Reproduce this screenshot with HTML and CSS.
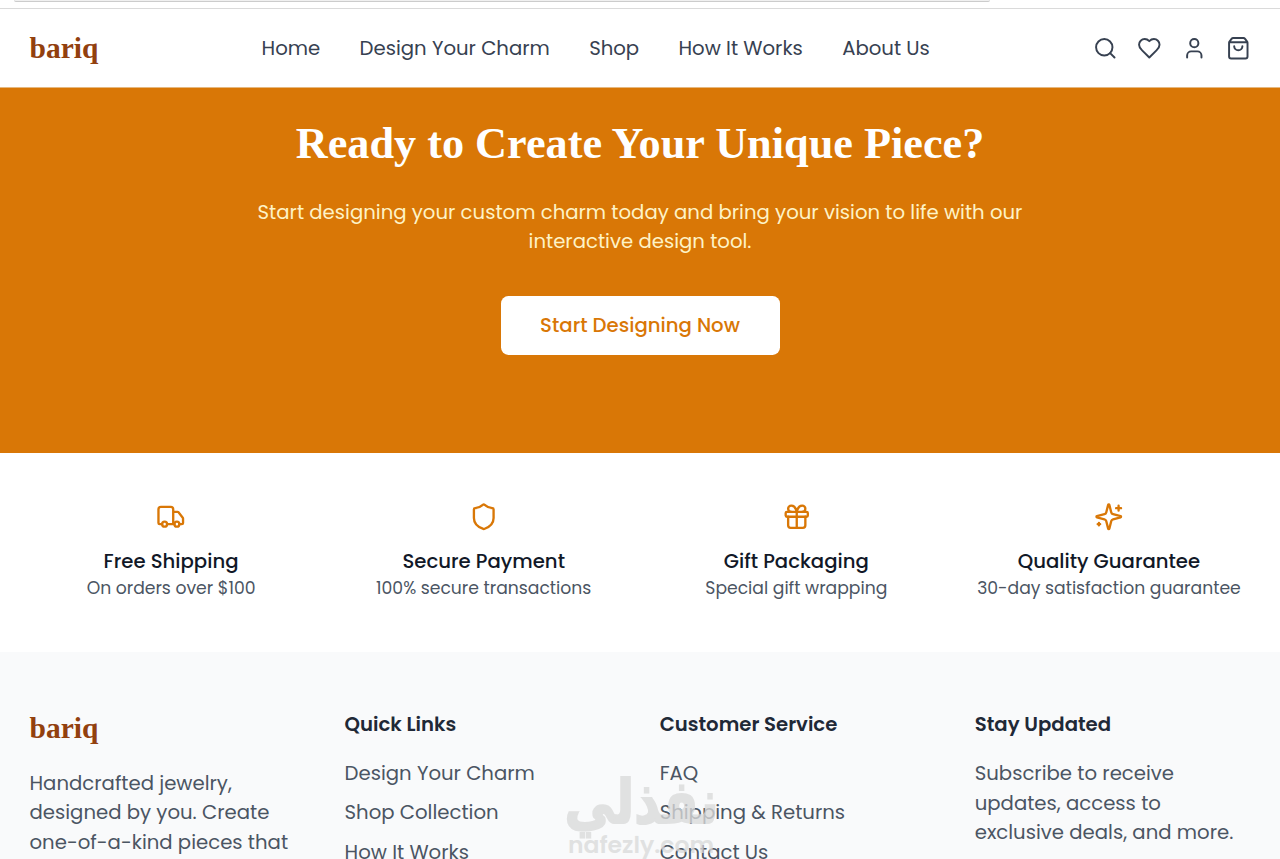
FILE: index.html
```html
<!DOCTYPE html>
<html lang="en">
<head>
<meta charset="utf-8">
<title>bariq</title>
<link rel="stylesheet" href="styles.css">
</head>
<body>
<div class="chrome"><div class="address"></div></div>
<header class="header">
  <a class="logo">bariq</a>
  <nav class="nav">
    <a>Home</a><a>Design Your Charm</a><a>Shop</a><a>How It Works</a><a>About Us</a>
  </nav>
  <div class="actions">
    <svg viewBox="0 0 24 24"><circle cx="11" cy="11" r="8"/><path d="m21 21-4.3-4.3"/></svg>
    <svg viewBox="0 0 24 24"><path d="M19 14c1.49-1.46 3-3.21 3-5.5A5.5 5.5 0 0 0 16.5 3c-1.76 0-3 .5-4.5 2-1.5-1.5-2.74-2-4.5-2A5.5 5.5 0 0 0 2 8.5c0 2.3 1.5 4.05 3 5.5l7 7Z"/></svg>
    <svg viewBox="0 0 24 24"><path d="M19 21v-2a4 4 0 0 0-4-4H9a4 4 0 0 0-4 4v2"/><circle cx="12" cy="7" r="4"/></svg>
    <svg viewBox="0 0 24 24"><path d="M3.1 6.03h17.8M3.4 5.47a2 2 0 0 0-.4 1.2V20a2 2 0 0 0 2 2h14a2 2 0 0 0 2-2V6.67a2 2 0 0 0-.4-1.2l-2-2.67A2 2 0 0 0 17 2H7a2 2 0 0 0-1.6.8zM16 10a4 4 0 0 1-8 0"/></svg>
  </div>
</header>
<section class="cta">
  <h2>Ready to Create Your Unique Piece?</h2>
  <p>Start designing your custom charm today and bring your vision to life with our<br>interactive design tool.</p>
  <a class="button">Start Designing Now</a>
</section>
<section class="features">
  <div class="feature">
    <svg viewBox="0 0 24 24"><path d="M14 18V6a2 2 0 0 0-2-2H4a2 2 0 0 0-2 2v11a1 1 0 0 0 1 1h2M15 18H9M19 18h2a1 1 0 0 0 1-1v-3.65a1 1 0 0 0-.22-.62l-3.48-4.35A1 1 0 0 0 17.52 8H14"/><circle cx="17" cy="18" r="2"/><circle cx="7" cy="18" r="2"/></svg>
    <h3>Free Shipping</h3>
    <p>On orders over $100</p>
  </div>
  <div class="feature">
    <svg viewBox="0 0 24 24"><path d="M20 13c0 5-3.5 7.5-7.66 8.95a1 1 0 0 1-.67-.01C7.5 20.5 4 18 4 13V6a1 1 0 0 1 1-1c2 0 4.5-1.2 6.24-2.72a1.17 1.17 0 0 1 1.52 0C14.51 3.81 17 5 19 5a1 1 0 0 1 1 1z"/></svg>
    <h3>Secure Payment</h3>
    <p>100% secure transactions</p>
  </div>
  <div class="feature">
    <svg viewBox="0 0 24 24"><rect x="3" y="8" width="18" height="4" rx="1"/><path d="M12 8v13M19 12v7a2 2 0 0 1-2 2H7a2 2 0 0 1-2-2v-7M7.5 8a2.5 2.5 0 0 1 0-5A4.8 8 0 0 1 12 8a4.8 8 0 0 1 4.5-5 2.5 2.5 0 0 1 0 5"/></svg>
    <h3>Gift Packaging</h3>
    <p>Special gift wrapping</p>
  </div>
  <div class="feature">
    <svg viewBox="0 0 24 24"><path d="M9.94 15.5A2 2 0 0 0 8.5 14.06l-6.14-1.58a.5.5 0 0 1 0-.96L8.5 9.94A2 2 0 0 0 9.94 8.5l1.58-6.14a.5.5 0 0 1 .96 0L14.06 8.5A2 2 0 0 0 15.5 9.94l6.14 1.58a.5.5 0 0 1 0 .96L15.5 14.06a2 2 0 0 0-1.44 1.44l-1.58 6.14a.5.5 0 0 1-.96 0zM20 3v4M22 5h-4M4 17v2M5 18H3"/></svg>
    <h3>Quality Guarantee</h3>
    <p>30-day satisfaction guarantee</p>
  </div>
</section>
<footer class="footer">
  <div>
    <div class="logo">bariq</div>
    <p class="about">Handcrafted jewelry,<br>designed by you. Create<br>one-of-a-kind pieces that</p>
  </div>
  <div>
    <h4>Quick Links</h4>
    <ul><li>Design Your Charm</li><li>Shop Collection</li><li>How It Works</li></ul>
  </div>
  <div>
    <h4>Customer Service</h4>
    <ul><li>FAQ</li><li>Shipping &amp; Returns</li><li>Contact Us</li></ul>
  </div>
  <div>
    <h4>Stay Updated</h4>
    <p>Subscribe to receive<br>updates, access to<br>exclusive deals, and more.</p>
  </div>
</footer>
<div class="mark">
  <div class="mark-ar" lang="ar" dir="rtl">نفذلي</div>
  <div class="mark-en">nafezly.com</div>
</div>
</body>
</html>
```
FILE: styles.css
```css
* { box-sizing: border-box; }
body, h2, h3, h4, p, ul { margin: 0; padding: 0; }
body {
  height: 859px; overflow: hidden; position: relative; background: #fff;
  font-family: Poppins, Inter, sans-serif; font-size: 19.68px; line-height: 29.5px; color: #4b5563;
}
svg { fill: none; stroke: currentColor; stroke-width: 2; stroke-linecap: round; stroke-linejoin: round; display: block; }

.chrome { height: 9px; border-bottom: 1px solid #dadada; padding-left: 14px; }
.address { width: 976px; height: 2px; background: #f0f0f0; border-bottom: 1px solid #ccc; border-radius: 0 0 12px 12px; }

.header { height: 79px; padding: 0 29.5px; display: flex; align-items: center; justify-content: space-between; border-bottom: 1px solid #e5b880; }
.logo { font-family: "Liberation Serif", serif; font-weight: 700; font-size: 29.5px; line-height: 39.3px; color: #92400e; }
.header .logo { padding-top: 1px; }
.nav { display: flex; gap: 39.3px; color: #374151; padding-top: 1px; }
.actions { display: flex; gap: 19.7px; color: #374151; }
.actions svg { width: 24.6px; height: 24.6px; stroke-width: 1.9; }

.cta { height: 365px; background: #d97706; text-align: center; padding-top: 31px; }
.cta h2 { font: 700 44.25px/49px "Liberation Serif", serif; color: #fff; margin-bottom: 29.7px; }
.cta p { color: #fef3c7; margin-bottom: 39.3px; }
.button {
  display: inline-flex; width: 279px; height: 59px; align-items: center; justify-content: center;
  border-radius: 7.4px; background: #fff; color: #d97706; font-weight: 500;
}

.features { height: 199px; padding: 49px 29.5px 0; display: grid; grid-template-columns: repeat(4, 1fr); gap: 29.5px; text-align: center; }
.feature svg { width: 29.5px; height: 29.5px; margin: 0 auto 15.2px; color: #d97706; stroke-width: 1.9; }
.feature h3 { font-size: 19.68px; font-weight: 500; color: #111827; line-height: 29.5px; }
.feature p { font-size: 17.2px; line-height: 24.6px; }

.footer { height: 207px; overflow: hidden; background: #f9fafb; padding: 57.7px 29.5px 0; display: grid; grid-template-columns: repeat(4, 1fr); gap: 39.3px; }
.footer h4 { font-size: 19.68px; font-weight: 600; color: #1f2937; margin-bottom: 19.9px; }
.footer ul { list-style: none; display: grid; gap: 9.9px; }
.footer .logo { margin-top: -.4px; }
.about { margin-top: 20px; }

/* Translucent brand mark laid over the footer */
.mark { position: absolute; left: 563px; top: 774px; width: 156px; height: 85px; color: #dadada; opacity: .78; }
.mark-ar { font: 700 60px/57px "DejaVu Sans", sans-serif; -webkit-text-stroke: 2px #dadada; width: max-content; transform: scaleX(.84); transform-origin: right; float: right; }
.mark-en { clear: both; font: 600 23.5px/28px Poppins, Inter, sans-serif; text-align: center; white-space: nowrap; }
```
